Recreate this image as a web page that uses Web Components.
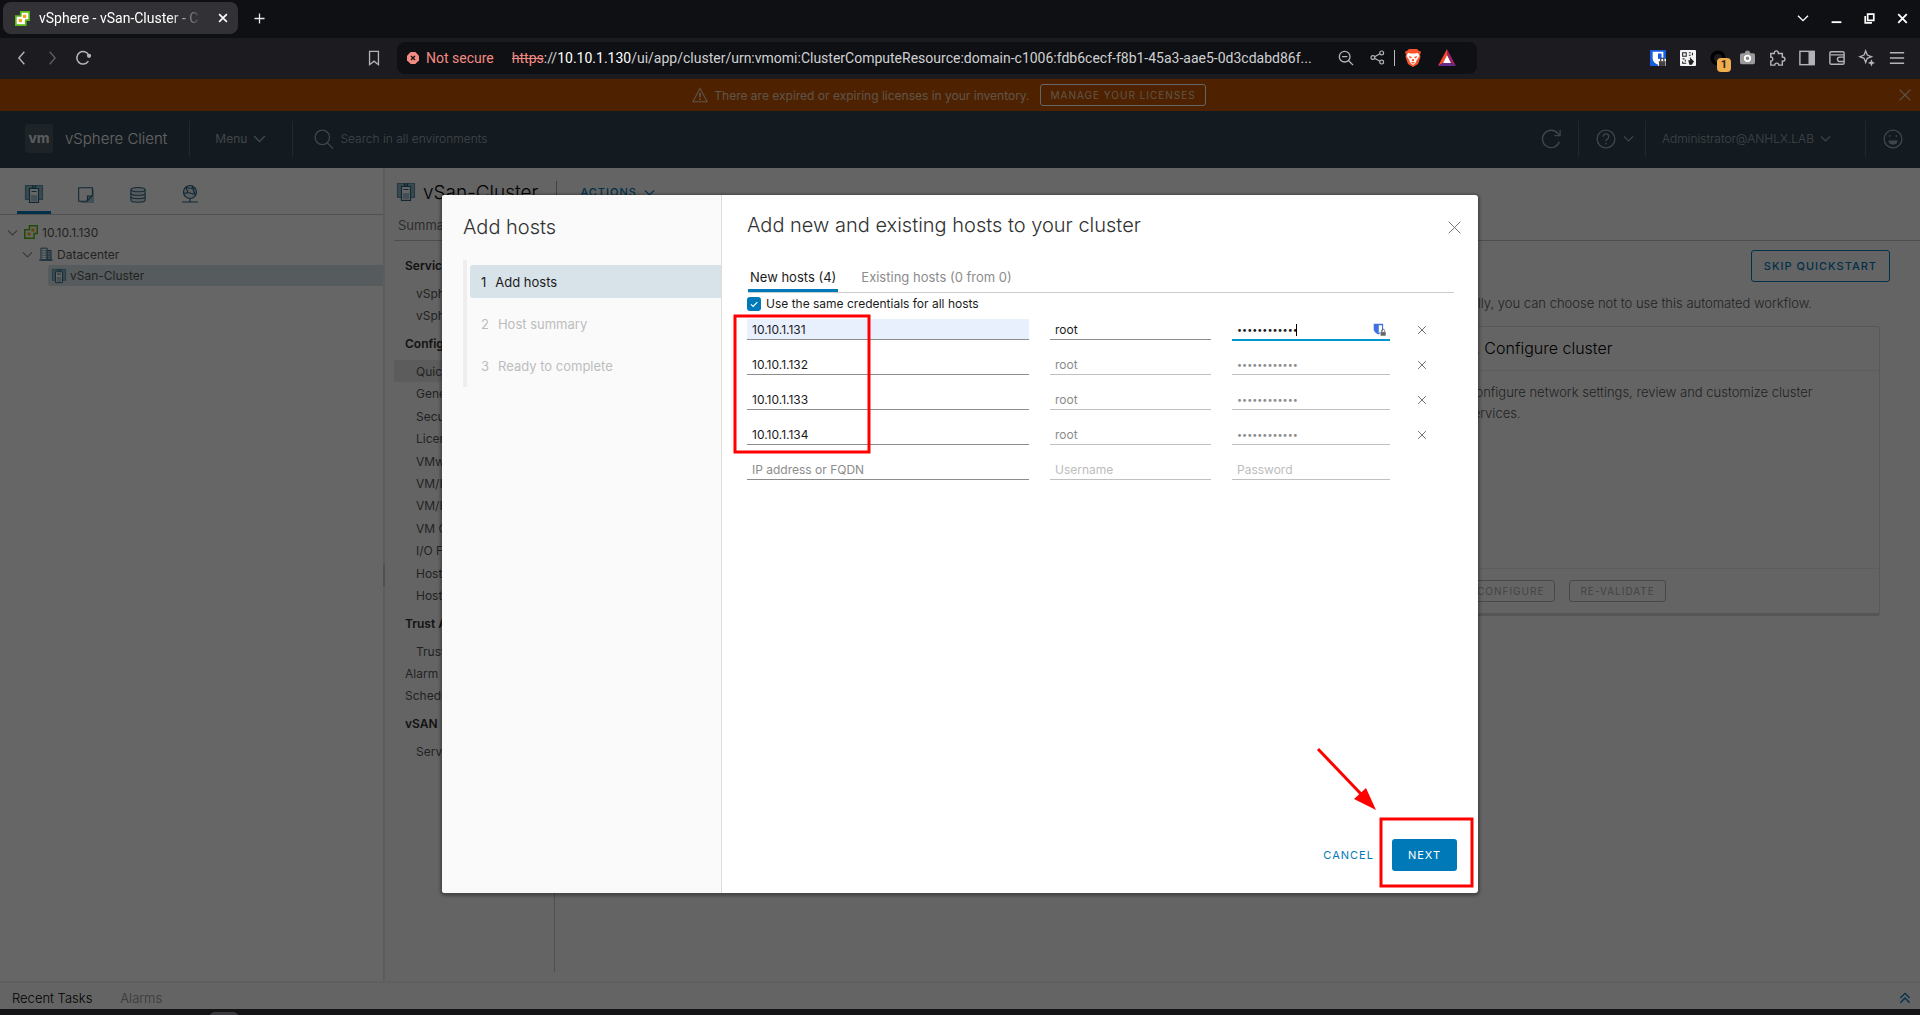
<!DOCTYPE html>
<html lang="en">
<head>
<meta charset="utf-8">
<title>vSphere - vSan-Cluster</title>
<style>
  html, body { margin: 0; height: 100%; }
  body { display: flex; flex-direction: column; overflow: hidden; background: #141316; font-family: Inter, "Liberation Sans", sans-serif; font-size: 12px; }
</style>
</head>
<body>
<browser-chrome></browser-chrome>
<vs-app>
  <license-banner slot="top"></license-banner>
  <client-header slot="top"></client-header>
  <inventory-panel></inventory-panel>
  <cluster-view></cluster-view>
  <tasks-bar slot="bottom"></tasks-bar>
  <host-wizard slot="dialog"></host-wizard>
</vs-app>
<dock-edge></dock-edge>

<script>
const BASE = `:host,*{box-sizing:border-box}button,input{font:inherit;color:inherit;margin:0}button{background:none;border:0;padding:0;display:flex;align-items:center;justify-content:center;cursor:pointer}a{color:inherit;text-decoration:none}h1,h2,h3,p,ul,ol{margin:0;padding:0;font-weight:inherit;font-size:inherit}ul,ol{list-style:none}`;
function define(name, css, html) {
  customElements.define(name, class extends HTMLElement {
    constructor() { super(); this.attachShadow({ mode: 'open' }); }
    connectedCallback() {
      this.shadowRoot.innerHTML = `<style>${BASE}${css}</style>` + (typeof html === 'function' ? html(this) : html);
    }
  });
}

const ICONS = {
  cluster: `<g stroke="#2a6583"><path fill="#8fb6c7" stroke="#5f93aa" d="M.5.500h8v14h-8zM9.500.500h8v14h-8z"/><path stroke="none" fill="#fff" d="M4.500 3h9v14.500h-9z"/><path d="M4.500 3.500h9v14h-9z"/><path d="M6.500 6.500h5M7.500 0v3M10.500 0v3"/></g><rect x="6" y="10" width="6" height="6.500" fill="#a5c6d4" stroke="none"/>`,
  vcenter: `<g stroke="none"><path fill="#54b815" d="M6 0h12v12h-4v6H0V5h6z"/><path fill="#fff" d="M8 2h8v8h-4v6H2V7h6z"/><path fill="#f9a51a" d="M9.500 4.500h4v4h-4zM4.500 9.500h4v4h-4z"/></g>`,
  bitwarden: `<g stroke="none"><path fill="#175ddc" d="M0 0h18v18H0z"/><path fill="#fff" d="M3 2h12v8c0 3-3 5-6 6.500C6 15 3 13 3 10z"/><path fill="#175ddc" d="M9 4h4v6c0 2-2 3.500-4 4.500z"/><path fill="#fff" d="M9 10h9v8H9z"/><path fill="#444" d="M10 12.500h7.500V18H10z"/></g><path stroke="#444" stroke-width="1.500" d="M12 12.500V11a1.800 1.800 0 0 1 3.600 0v1.500"/>`,
  close: `<path d="M2 2l14 14M16 2L2 16"/>`,
  plus: `<path d="M9 2v14M2 9h14"/>`,
  back: `<path d="M12 1L5 9l7 8"/>`,
  forward: `<path d="M6 1l7 8-7 8"/>`,
  reload: `<path d="M15 12.500A7 7 0 1 1 15.500 6"/><circle cx="15.800" cy="6.500" r="1.500" fill="currentColor"/>`,
  bookmark: `<path d="M4 1.500h10v15l-5-4-5 4z"/>`,
  insecure: `<path fill="#f28b82" stroke="none" d="M5.500 0h7L18 5.500v7L12.500 18h-7L0 12.500v-7z"/><path stroke="#0f1014" d="M6 6l6 6M12 6l-6 6"/>`,
  zoomout: `<circle cx="7.500" cy="7.500" r="6"/><path d="M12 12l5 5M4.500 7.500h6"/>`,
  share: `<circle cx="14" cy="3.500" r="2.300"/><circle cx="3.500" cy="9" r="2.300"/><circle cx="14" cy="14.500" r="2.300"/><path d="M5.500 8L12 4.500M5.500 10l6.500 3.500"/>`,
  brave: `<g stroke="none"><path fill="#fb542b" d="M5 0h8l2 2 2 .5L16 6l.5 2-2.500 7-5 3-5-3L1.500 8 2 6 1 2.500 3 2z"/><path fill="#fff" d="M4 4l3 .5h4L14 4l1.500 3-2.500 3.500-1.500 3.500L9 16l-2.500-2L5 10.500 2.500 7z"/><path fill="#fb542b" d="M5 7l3 1-1 1.500L5.500 9zM13 7l-3 1 1 1.500L12.500 9zM8.200 10h1.600l.5 1.500L9 12.300l-1.300-.8zM7 13.500l2-.8 2 .8-2 1.200z"/></g>`,
  rewards: `<g stroke="none"><path fill="#ff4724" d="M9 0L0 17l5-3 4-8z"/><path fill="#9e1f63" d="M9 0l9 17-5-3-4-8z"/><path fill="#662d91" d="M0 17h18l-5-3H5z"/><path fill="#fff" d="M9 6l4 8H5z"/></g>`,
  qr: `<rect width="18" height="18" rx="1" fill="#f4f4f4" stroke="none"/><g stroke="#222" stroke-width="1.200"><path d="M3 3h4v4H3zM10 3h2M14 3v3M10 6h2M3 10h2M6 11v2M3 13v2h4M11 9h1"/><path fill="#222" d="M10 12h2v-2l3 3-2 3h-2z"/></g>`,
  ring: `<circle cx="9" cy="9" r="6.500" stroke="#000" stroke-width="4"/>`,
  camera: `<path fill="#9a9a9a" stroke="none" d="M2 4h3.500L7 1h4l1.500 3H16a2 2 0 0 1 2 2v9a2 2 0 0 1-2 2H2a2 2 0 0 1-2-2V6a2 2 0 0 1 2-2z"/><circle cx="9" cy="10" r="3.300" stroke="#fff" stroke-width="2.200" fill="#888"/>`,
  puzzle: `<path d="M2 4h4c-.5-4 5-4 4.500 0H15v4c4-.5 4 5 0 4.500V17h-4c0-3-4.500-3-4.500 0H2v-4.500c3 .5 3-5 0-4.500z"/>`,
  panel: `<rect x="1" y="1.500" width="16" height="15"/><path fill="currentColor" d="M11.500 2H17v14h-5.500z"/>`,
  wallet: `<path d="M17 6V3.500A1.500 1.500 0 0 0 15.500 2H2.500A1.500 1.500 0 0 0 1 3.500v11A1.500 1.500 0 0 0 2.500 16h13a1.500 1.500 0 0 0 1.500-1.500V5.500H2M17 8h-5a2.500 2.500 0 0 0 0 5h5z"/>`,
  sparkle: `<path d="M7.500 1l1.800 4.700L14 7.500 9.300 9.300 7.500 14 5.700 9.300 1 7.500l4.700-1.800z"/><path fill="currentColor" stroke="none" d="M14 10.500l1.200 2.800 2.800 1.200-2.800 1.200L14 18.500l-1.200-2.800-2.800-1.200 2.800-1.200z"/>`,
  menu: `<path d="M1 3h16M1 9h16M1 15h16"/>`,
  chevron: `<path d="M1.500 5.500L9 13l7.500-7.500"/>`,
  minimize: `<path d="M1 15h16"/>`,
  restore: `<path d="M6 2h10v10H6z"/><path d="M2 5v11h11"/>`,
  warning: `<path d="M9 1.500L17 16.500H1z"/><path d="M9 6.500v5M9 13v1.500" stroke-width="2"/>`,
  search: `<circle cx="7.500" cy="7.500" r="6.500"/><path d="M12 12.500l5 5"/>`,
  refresh: `<path d="M16.500 11.500A7.800 7.800 0 1 1 15 3.800l2 2M17.200 1v5H12"/>`,
  help: `<circle cx="9" cy="9" r="8"/><path d="M6.500 7c0-3.400 5-3.400 5 0 0 2-2.500 2-2.500 4M9 12.500V14"/>`,
  smile: `<circle cx="9" cy="9" r="8"/><path fill="currentColor" d="M5.500 11h7c-.6 3.300-6.400 3.300-7 0z"/><path d="M5.500 6.300h1M11.500 6.300h1" stroke-width="1.600"/>`,
  vms: `<path fill="#a5c6d4" stroke="none" d="M3 3h15v15H3z"/><path fill="#fff" stroke="#2a6583" d="M.8.800h15.400V9.500L10 16H.8z"/><path fill="#2a6583" stroke="none" d="M16.500 9.500L10 16.500V9.500z"/><path fill="#a5c6d4" stroke="none" d="M11.200 10.700h3L11.200 14z"/>`,
  storage: `<g stroke="#2a6583" fill="#dfe9ee"><path d="M1 3v12c0 3 16 3 16 0V3"/><ellipse cx="9" cy="3" rx="8" ry="2.400"/><path fill="none" d="M1 7c0 3 16 3 16 0M1 11c0 3 16 3 16 0"/></g>`,
  network: `<g stroke="#2a6583"><circle cx="9" cy="7" r="6.500" fill="#dfe9ee"/><path d="M5 2.500l2 5-4.500 1M7 7.500l7 2M11 1l3 8.500M5 2.500L14 4M9 13.500V17M1 17h16"/></g>`,
  datacenter: `<g stroke="#2a6583"><path fill="#fff" d="M2.500 1.500h8v15h-8z"/><path fill="#a5c6d4" d="M10.500 4.500h5v12h-5z"/><path d="M5 4v10M8 4v10M13 7v7" stroke-dasharray="1.500 1.500"/><path d="M0 17h18"/></g>`,
  shield: `<path fill="#3c73e0" stroke="none" d="M1 1h13v8c0 3-3 5-6.500 7C4 14 1 12 1 9z"/><path fill="#fff" stroke="none" d="M8 3h4.500v6c0 2-2 3.500-4.500 5z"/><path fill="#666" stroke="#fff" stroke-width=".8" d="M10 12h8v6h-8z"/><path stroke="#666" d="M12 12v-1.500a2 2 0 0 1 4 0V12"/>`,
  check: `<path d="M3.500 9.500l4 4 7.500-8"/>`,
  up2: `<path d="M2 9l7-7 7 7M2 16l7-7 7 7"/>`
};
define('x-icon', `:host{display:block;flex:none;line-height:0}svg{display:block;overflow:visible}`, el => {
  const s = el.getAttribute('size') || 16, w = el.getAttribute('weight') || 1.2;
  return `<svg width="${s}" height="${s}" viewBox="0 0 18 18" fill="none" stroke="currentColor" stroke-width="${w}" aria-hidden="true">${ICONS[el.getAttribute('name')] || ''}</svg>`;
});

/* Browser window frame: tab strip and address row */
define('browser-chrome', `
  :host{display:block;flex:none;font-family:Roboto,"Liberation Sans",sans-serif;font-size:14px;color:#e6e6e6}
  .strip{height:38px;background:#0f1014;display:flex;align-items:center;padding:2px 12px 4px 3px}
  .tab{width:235px;height:32px;border-radius:8px;background:#313136;display:flex;align-items:center;padding:0 10px 0 12px;gap:9px;color:#fff}
  .name{flex:1;white-space:nowrap;overflow:hidden;-webkit-mask-image:linear-gradient(90deg,#000 76%,transparent 97%)}
  .strip>button{margin-left:15px}
  .win{margin-left:auto;display:flex;gap:22px;align-items:center;color:#fff}
  .row{height:41px;background:#1c1b1f;display:flex;align-items:center;padding:0 15px 2px;color:#b4b4b8}
  .nav{display:flex;gap:16px;align-items:center}
  .off{color:#5d5d62}
  .mark{margin-left:275px}
  .bar{margin-left:15px;width:1080px;flex:0 1 auto;min-width:0;height:32px;border-radius:8px;background:#0f1014;display:flex;align-items:center;padding:0 21px 0 10px}
  .bad{color:#f28b82;margin-left:7px;white-space:nowrap}
  .url{margin-left:18px;white-space:nowrap;overflow:hidden;text-overflow:ellipsis;flex:1;min-width:0;color:#d0d0d2}
  .url s{color:#f28b82}.url b{font-weight:400;color:#fff}
  .tools{display:flex;gap:16px;align-items:center;margin-left:12px}
  .tools i{width:1px;height:16px;background:#bbb;margin:0 -7px}
  .ext{margin-left:auto;display:flex;gap:14px;align-items:center}
  .badged{position:relative}
  .badged span{position:absolute;left:7px;top:8px;width:14px;height:14px;border-radius:4px;background:#f0ad4e;color:#222;font-size:11px;line-height:14px;text-align:center;font-weight:700}
`, `
  <div class="strip">
    <div class="tab"><x-icon name="vcenter" size="15"></x-icon><span class="name">vSphere - vSan-Cluster - C</span><button aria-label="Close tab"><x-icon name="close" size="10" weight="3"></x-icon></button></div>
    <button aria-label="New tab"><x-icon name="plus" size="13" weight="1.800"></x-icon></button>
    <div class="win"><button aria-label="Search tabs"><x-icon name="chevron" size="12" weight="2"></x-icon></button><button aria-label="Minimize"><x-icon name="minimize" size="11" weight="3"></x-icon></button><button aria-label="Restore"><x-icon name="restore" size="11" weight="2.800"></x-icon></button><button aria-label="Close window"><x-icon name="close" size="11" weight="3"></x-icon></button></div>
  </div>
  <div class="row">
    <div class="nav"><button aria-label="Back"><x-icon name="back" size="14" weight="1.800"></x-icon></button><button class="off" aria-label="Forward"><x-icon name="forward" size="14" weight="1.800"></x-icon></button><button aria-label="Reload"><x-icon name="reload" size="16" weight="1.800"></x-icon></button></div>
    <button class="mark" aria-label="Bookmark"><x-icon name="bookmark" size="16" weight="1.500"></x-icon></button>
    <div class="bar"><x-icon name="insecure" size="12" weight="1.800"></x-icon><span class="bad">Not secure</span>
      <span class="url"><s>https</s>://<b>10.10.1.130</b>/ui/app/cluster/urn:vmomi:ClusterComputeResource:domain-c1006:fdb6cecf-f8b1-45a3-aae5-0d3cdabd86f...</span>
      <div class="tools"><button aria-label="Zoom"><x-icon name="zoomout" size="16" weight="1.500"></x-icon></button><button aria-label="Share"><x-icon name="share" size="15" weight="1.400"></x-icon></button><i></i><button aria-label="Brave Shields"><x-icon name="brave" size="18"></x-icon></button><button aria-label="Rewards"><x-icon name="rewards" size="18"></x-icon></button></div></div>
    <div class="ext"><button aria-label="Bitwarden"><x-icon name="bitwarden"></x-icon></button><button aria-label="QR code"><x-icon name="qr"></x-icon></button><button class="badged" aria-label="Extension"><x-icon name="ring"></x-icon><span>1</span></button><button aria-label="Capture"><x-icon name="camera" size="15"></x-icon></button><button aria-label="Extensions"><x-icon name="puzzle" weight="1.600"></x-icon></button><button aria-label="Side panel"><x-icon name="panel" weight="1.600"></x-icon></button><button aria-label="Wallet"><x-icon name="wallet" weight="1.600"></x-icon></button><button aria-label="Assistant"><x-icon name="sparkle" weight="1.500"></x-icon></button><button aria-label="Menu"><x-icon name="menu" weight="1.600"></x-icon></button></div>
  </div>`);

define('vs-app', `
  :host{display:flex;flex-direction:column;flex:1;min-height:0;position:relative;background:#fafafa;color:#565656}
  main{flex:1;min-height:0;display:flex}
  .scrim{position:absolute;inset:0;background:rgba(0,0,0,.6);display:flex;align-items:center;justify-content:center}
`, `<slot name="top"></slot><main><slot></slot></main><slot name="bottom"></slot><div class="scrim"><slot name="dialog"></slot></div>`);

define('license-banner', `
  :host{display:flex;flex:none;height:32px;background:#c25400;color:#eed2b8;align-items:center;padding:0 8px 0 9px}
  .mid{flex:1;display:flex;justify-content:center;align-items:center;gap:6px;padding-right:9px}
  .mid button{margin-left:4px;height:22px;padding:0 9px 0 10px;border:1px solid #fff;border-radius:3px;font-size:10px;letter-spacing:1px}
`, `<div class="mid"><x-icon name="warning"></x-icon><span>There are expired or expiring licenses in your inventory.</span><button>MANAGE YOUR LICENSES</button></div><button aria-label="Dismiss"><x-icon name="close" size="14" weight="1.500"></x-icon></button>`);

define('client-header', `
  :host{display:flex;flex:none;height:57px;background:#314351;color:#a0adb6;align-items:center;padding:0 17px 2px 25px}
  .logo{width:28px;height:29px;border-radius:3px;background:#4b5763;color:#e6e6e6;font-weight:700;font-size:14px;line-height:28px;text-align:center}
  h1{margin-left:12px;font-size:15px;font-weight:300;color:#fafafa;white-space:nowrap}
  i{width:1px;height:36px;background:#566470}
  .line{margin-left:22px}
  .menu{margin:0 26px 0 25px;gap:6px}
  .search{display:flex;align-items:center;gap:6px;margin-left:21px;flex:1}
  .search input{border:0;background:none;outline:0;width:220px;font-weight:300;padding:0}
  .search input::placeholder{color:#a0adb6;opacity:1}
  .r{display:flex;align-items:center;gap:17px}
  .help{gap:7px;margin-right:-6px}
  .user{gap:6px;font-weight:300;margin:0 17px 0 -1px}
`, `<div class="logo">vm</div><h1>vSphere Client</h1><i class="line"></i>
  <button class="menu">Menu <x-icon name="chevron" size="13" weight="2"></x-icon></button><i></i>
  <label class="search"><x-icon name="search" size="20"></x-icon><input aria-label="Search" placeholder="Search in all environments"></label>
  <div class="r"><button aria-label="Refresh"><x-icon name="refresh" size="20"></x-icon></button><i></i>
  <button class="help" aria-label="Help"><x-icon name="help" size="20"></x-icon><x-icon name="chevron" size="11" weight="2"></x-icon></button>
  <i></i><button class="user">Administrator@ANHLX.LAB<x-icon name="chevron" size="11" weight="2"></x-icon></button>
  <i></i><button aria-label="Feedback"><x-icon name="smile" size="20"></x-icon></button></div>`);

define('inventory-panel', `
  :host{display:flex;flex-direction:column;flex:none;width:385px;background:#fff;border-right:2px solid #e6e6e6;position:relative}
  .tabs{height:47px;display:flex;gap:18px;padding-left:17px;border-bottom:1px solid #c8c8c8;align-items:flex-end}
  .tabs button{width:34px;height:32px;padding-bottom:8px;border-bottom:3px solid transparent;align-items:flex-end}
  .tabs .on{border-color:#0079b8}
  .tree{padding-top:6px}
  a{display:flex;align-items:center;height:22px;gap:4px;color:#565656}
  .k{color:#8c8c8c;margin-right:2px}
  .a{padding-left:7px}.b{padding-left:22px}.c{margin-left:48px;padding-left:4px;background:#d8e3e9;border-radius:3px 0 0 3px;height:21px}
  .grip{position:absolute;right:-2px;top:calc(50% - 11px);width:2px;height:22px;background:#c8c8c8}
`, `<nav class="tabs"><button class="on" aria-label="Hosts and clusters"><x-icon name="cluster" size="18"></x-icon></button><button aria-label="VMs"><x-icon name="vms"></x-icon></button><button aria-label="Storage"><x-icon name="storage"></x-icon></button><button aria-label="Networking"><x-icon name="network" size="18"></x-icon></button></nav>
  <div class="tree"><a class="a" href="#"><x-icon class="k" name="chevron" size="11" weight="1.800"></x-icon><x-icon name="vcenter" size="14"></x-icon>10.10.1.130</a>
  <a class="b" href="#"><x-icon class="k" name="chevron" size="11" weight="1.800"></x-icon><x-icon name="datacenter" size="14"></x-icon>Datacenter</a>
  <a class="c" href="#"><x-icon name="cluster" size="14"></x-icon>vSan-Cluster</a></div><div class="grip"></div>`);

define('side-nav', `
  :host{display:block;flex:none;width:161px;border-right:1px solid #c4c4c4;margin-bottom:9px;padding-top:8px}
  h3{height:33px;line-height:33px;padding-left:11px;font-weight:600;color:#313131}
  ul{display:flex;flex-direction:column}
  li{flex:1;display:flex;align-items:center;padding-left:22px;white-space:nowrap}
  .on{background:#e6e6e6}.flat{padding-left:11px}
`, () => {
  const group = (t, h, items) => `<h3>${t}</h3><ul style="height:${h}px">` + items.map(i => `<li class="${i[0] === '*' ? 'on' : i[0] === '-' ? 'flat' : ''}"><a href="#">${i.replace(/^[*-]/, '')}</a></li>`).join('') + '</ul>';
  return group('Services', 45, ['vSphere DRS', 'vSphere HA'])
    + group('Configuration', 247, ['*Quickstart', 'General', 'Security', 'Licensing', 'VMware EVC', 'VM/Host Groups', 'VM/Host Rules', 'VM Overrides', 'I/O Filters', 'Host Options', 'Host Profile'])
    + group('Trust Authority', 67, ['Trust Authority', '-Alarm Definitions', '-Scheduled Tasks'])
    + group('vSAN', 22, ['Services']);
});

define('quick-card', `
  :host{display:flex;flex-direction:column;width:428px;height:290px;border:1px solid #ddd;border-bottom:3px solid #d4d4d4;border-radius:3px;color:#565656;font-size:13px}
  h3{font-size:16px;font-weight:300;color:#000;height:44px;line-height:42px;padding-left:13px;border-bottom:1px solid #e8e8e8}
  p{flex:1;padding:11px 48px 0 13px;line-height:21px;font-weight:300}
  footer{height:45px;border-top:1px solid #e8e8e8;display:flex;gap:14px;align-items:center;padding-left:13px}
`, `<h3><slot name="title"></slot></h3><p><slot></slot></p><footer><slot name="actions"></slot></footer>`);

define('cluster-view', `
  :host{display:flex;flex-direction:column;flex:1;min-width:0;padding-left:9px}
  .head{height:46px;display:flex;align-items:center;padding:2px 0 0 3px;white-space:nowrap}
  h1{font-size:19px;color:#000;font-weight:350;margin-left:8px}
  .head i{width:1px;height:22px;background:#a0a0a0;margin:0 23px 0 18px}
  .act{font-size:11px;color:#0079b8;letter-spacing:1px;gap:7px;font-weight:500}
  .tabs{height:27px;border-bottom:1px solid #c4c4c4;padding-left:4px;font-size:13px;line-height:22px;color:#737373}
  .body{flex:1;min-height:0;display:flex}
  .work{flex:1;min-width:0;display:flex;flex-direction:column;align-items:flex-end;padding:9px 40px 0 20px}
  .skip{margin-right:-10px;height:32px;padding:0 12px;border:1px solid #0079b8;border-radius:3px;color:#0079b8;font-size:11px;font-weight:500;letter-spacing:1px}
  .intro{font-size:13px;font-weight:300;line-height:21px;margin:11px 68px 12px 0;white-space:nowrap}
  .grey{height:22px;padding:0 10px;border:1px solid #b4b4b4;border-radius:3px;font-size:10px;letter-spacing:1px;color:#aaa}
`, `<div class="head"><x-icon name="cluster" size="18"></x-icon><h1>vSan-Cluster</h1><i></i><button class="act">ACTIONS <x-icon name="chevron" size="11" weight="2"></x-icon></button></div>
  <div class="tabs"><a href="#">Summary</a></div>
  <div class="body"><side-nav></side-nav><section class="work"><button class="skip">SKIP QUICKSTART</button>
  <p class="intro">If you prefer to configure your cluster manually, you can choose not to use this automated workflow.</p>
  <quick-card><span slot="title">3. Configure cluster</span>Configure network settings, review and customize cluster services.<button slot="actions" class="grey">CONFIGURE</button><button slot="actions" class="grey">RE-VALIDATE</button></quick-card></section></div>`);

define('tasks-bar', `
  :host{display:flex;flex:none;height:28px;border-top:2px solid #eee;align-items:center;padding:4px 9px 0 12px;gap:28px;font-size:13px;font-weight:300;color:#000}
  .dim{color:#8c8c8c}.up{margin-left:auto;color:#0079b8}
`, `<button>Recent Tasks</button><button class="dim">Alarms</button><button class="up" aria-label="Expand"><x-icon name="up2" size="12" weight="2"></x-icon></button>`);

define('host-row', `
  :host{display:grid;grid-template-columns:282px 161px 158px 22px;column-gap:21px;height:21px;color:#1b1b1b}
  .f{position:relative;display:flex;min-width:0}
  input{width:100%;height:21px;border:0;border-bottom:1px solid #8c8c8c;background:none;outline:0;padding:0 5px;border-radius:0;font-size:12px}
  input:disabled{border-color:#c1c1c1;color:#8c8c8c}
  input::placeholder{color:#8c8c8c;opacity:1}input:disabled::placeholder{color:#bdbdbd}
  .auto{background:#e8f0fe}
  .dots{font-size:9px}
  .live{border-bottom:2px solid #0095d3;height:22px}
  .f x-icon{position:absolute;right:4px;top:4px}
  .caret{position:absolute;left:64px;top:5px;width:1px;height:12px;background:#000}
  button{color:#737373}
`, el => {
  const ip = el.getAttribute('ip') || '', on = el.hasAttribute('active'), user = ip ? 'root' : '', pw = ip ? '123456789012' : '', d = on ? '' : 'disabled';
  return `<div class="f"><input class="${on ? 'auto' : ''}" aria-label="Host address" placeholder="IP address or FQDN" value="${ip}"></div>
  <div class="f"><input aria-label="Username" placeholder="Username" value="${user}" ${d}></div>
  <div class="f"><input type="password" class="${ip ? 'dots' : ''} ${on ? 'live' : ''}" aria-label="Password" placeholder="Password" value="${pw}" ${d}>${on ? '<span class="caret"></span><x-icon name="shield" size="13"></x-icon>' : ''}</div>
  ${ip ? '<button aria-label="Remove host"><x-icon name="close" size="10" weight="1.800"></x-icon></button>' : ''}`;
});

define('host-wizard', `
  :host{display:flex;position:relative;width:min(1036px,90%);height:min(698px,90%);background:#fff;border-radius:3px;overflow:hidden;box-shadow:0 1px 3px 2px rgba(0,0,0,.3);color:#313131}
  aside{width:280px;flex:none;background:#fafafa;border-right:1px solid #ddd;padding:19px 0 0 21px}
  h2{font-size:20px;font-weight:350;line-height:26px;white-space:nowrap}
  ol{margin-top:20px;border-left:4px solid #eee;padding:5px 0 5px 3px;display:flex;flex-direction:column;gap:9px}
  li{height:33px;display:flex;align-items:center;font-size:13px;color:#bdbdbd;padding-left:11px;gap:9px}
  .on{background:#d8e3e9;color:#1b1b1b;border-radius:3px 0 0 3px}
  section{flex:1;min-width:0;display:flex;flex-direction:column;padding:17px 16px 22px 25px}
  header{display:flex;justify-content:space-between;align-items:flex-start}
  header button{margin-top:8px;color:#737373}
  .tabs{display:flex;border-bottom:1px solid #ccc;gap:21px;margin:26px 8px 0 1px}
  .tabs button{height:28px;padding:0 2px 3px;font-size:13px;color:#8c8c8c;white-space:nowrap}
  .tabs .on{background:none;border-bottom:3px solid #0079b8;border-radius:0;color:#1b1b1b;padding-bottom:0}
  .same{display:flex;align-items:center;gap:5px;height:21px;color:#1b1b1b}
  .box{position:relative;width:14px;height:14px;color:#fff}
  .box input{appearance:none;display:block;width:14px;height:14px;border-radius:3px;background:#0079b8}
  .box x-icon{position:absolute;left:2px;top:2px}
  .rows{display:flex;flex-direction:column;gap:14px;margin-top:5px}
  footer{margin-top:auto;display:flex;justify-content:flex-end;gap:18px;font-size:11px;padding-right:5px}
  footer button{letter-spacing:1px}
  .txt{color:#0079b8}
  .next{background:#0079b8;color:#fff;height:32px;padding:0 16px}
  .next{border-radius:3px}
  .marks{position:absolute;left:0;top:0;pointer-events:none}
`, `<aside><h2>Add hosts</h2><ol><li class="on"><span>1</span><span>Add hosts</span></li><li><span>2</span><span>Host summary</span></li><li><span>3</span><span>Ready to complete</span></li></ol></aside>
  <section><header><h2>Add new and existing hosts to your cluster</h2><button aria-label="Close"><x-icon name="close" size="15"></x-icon></button></header>
  <div class="tabs"><button class="on">New hosts (4)</button><button>Existing hosts (0 from 0)</button></div>
  <label class="same"><span class="box"><input type="checkbox" checked><x-icon name="check" size="10" weight="2"></x-icon></span>Use the same credentials for all hosts</label>
  <div class="rows"><host-row ip="10.10.1.131" active></host-row><host-row ip="10.10.1.132"></host-row><host-row ip="10.10.1.133"></host-row><host-row ip="10.10.1.134"></host-row><host-row></host-row></div>
  <footer><button class="txt">CANCEL</button><button class="next">NEXT</button></footer></section>
  <svg class="marks" width="1036" height="698" fill="none" stroke="#f00" stroke-width="3" aria-hidden="true"><rect x="293" y="121" width="134" height="136"/><rect x="939" y="624" width="91" height="67"/><path d="M876 554l44 46"/><path fill="#f00" stroke="none" d="M934 615l-22-11 12-11z"/></svg>`);

define('dock-edge', `
  :host{display:flex;flex:none;height:6px;background:#141316;padding-left:209px;overflow:hidden}
  span{width:30px;height:12px;margin-top:3px;border-radius:6px;background:#3c3a3e;flex:none}
`, `<span></span>`);
</script>
</body>
</html>
